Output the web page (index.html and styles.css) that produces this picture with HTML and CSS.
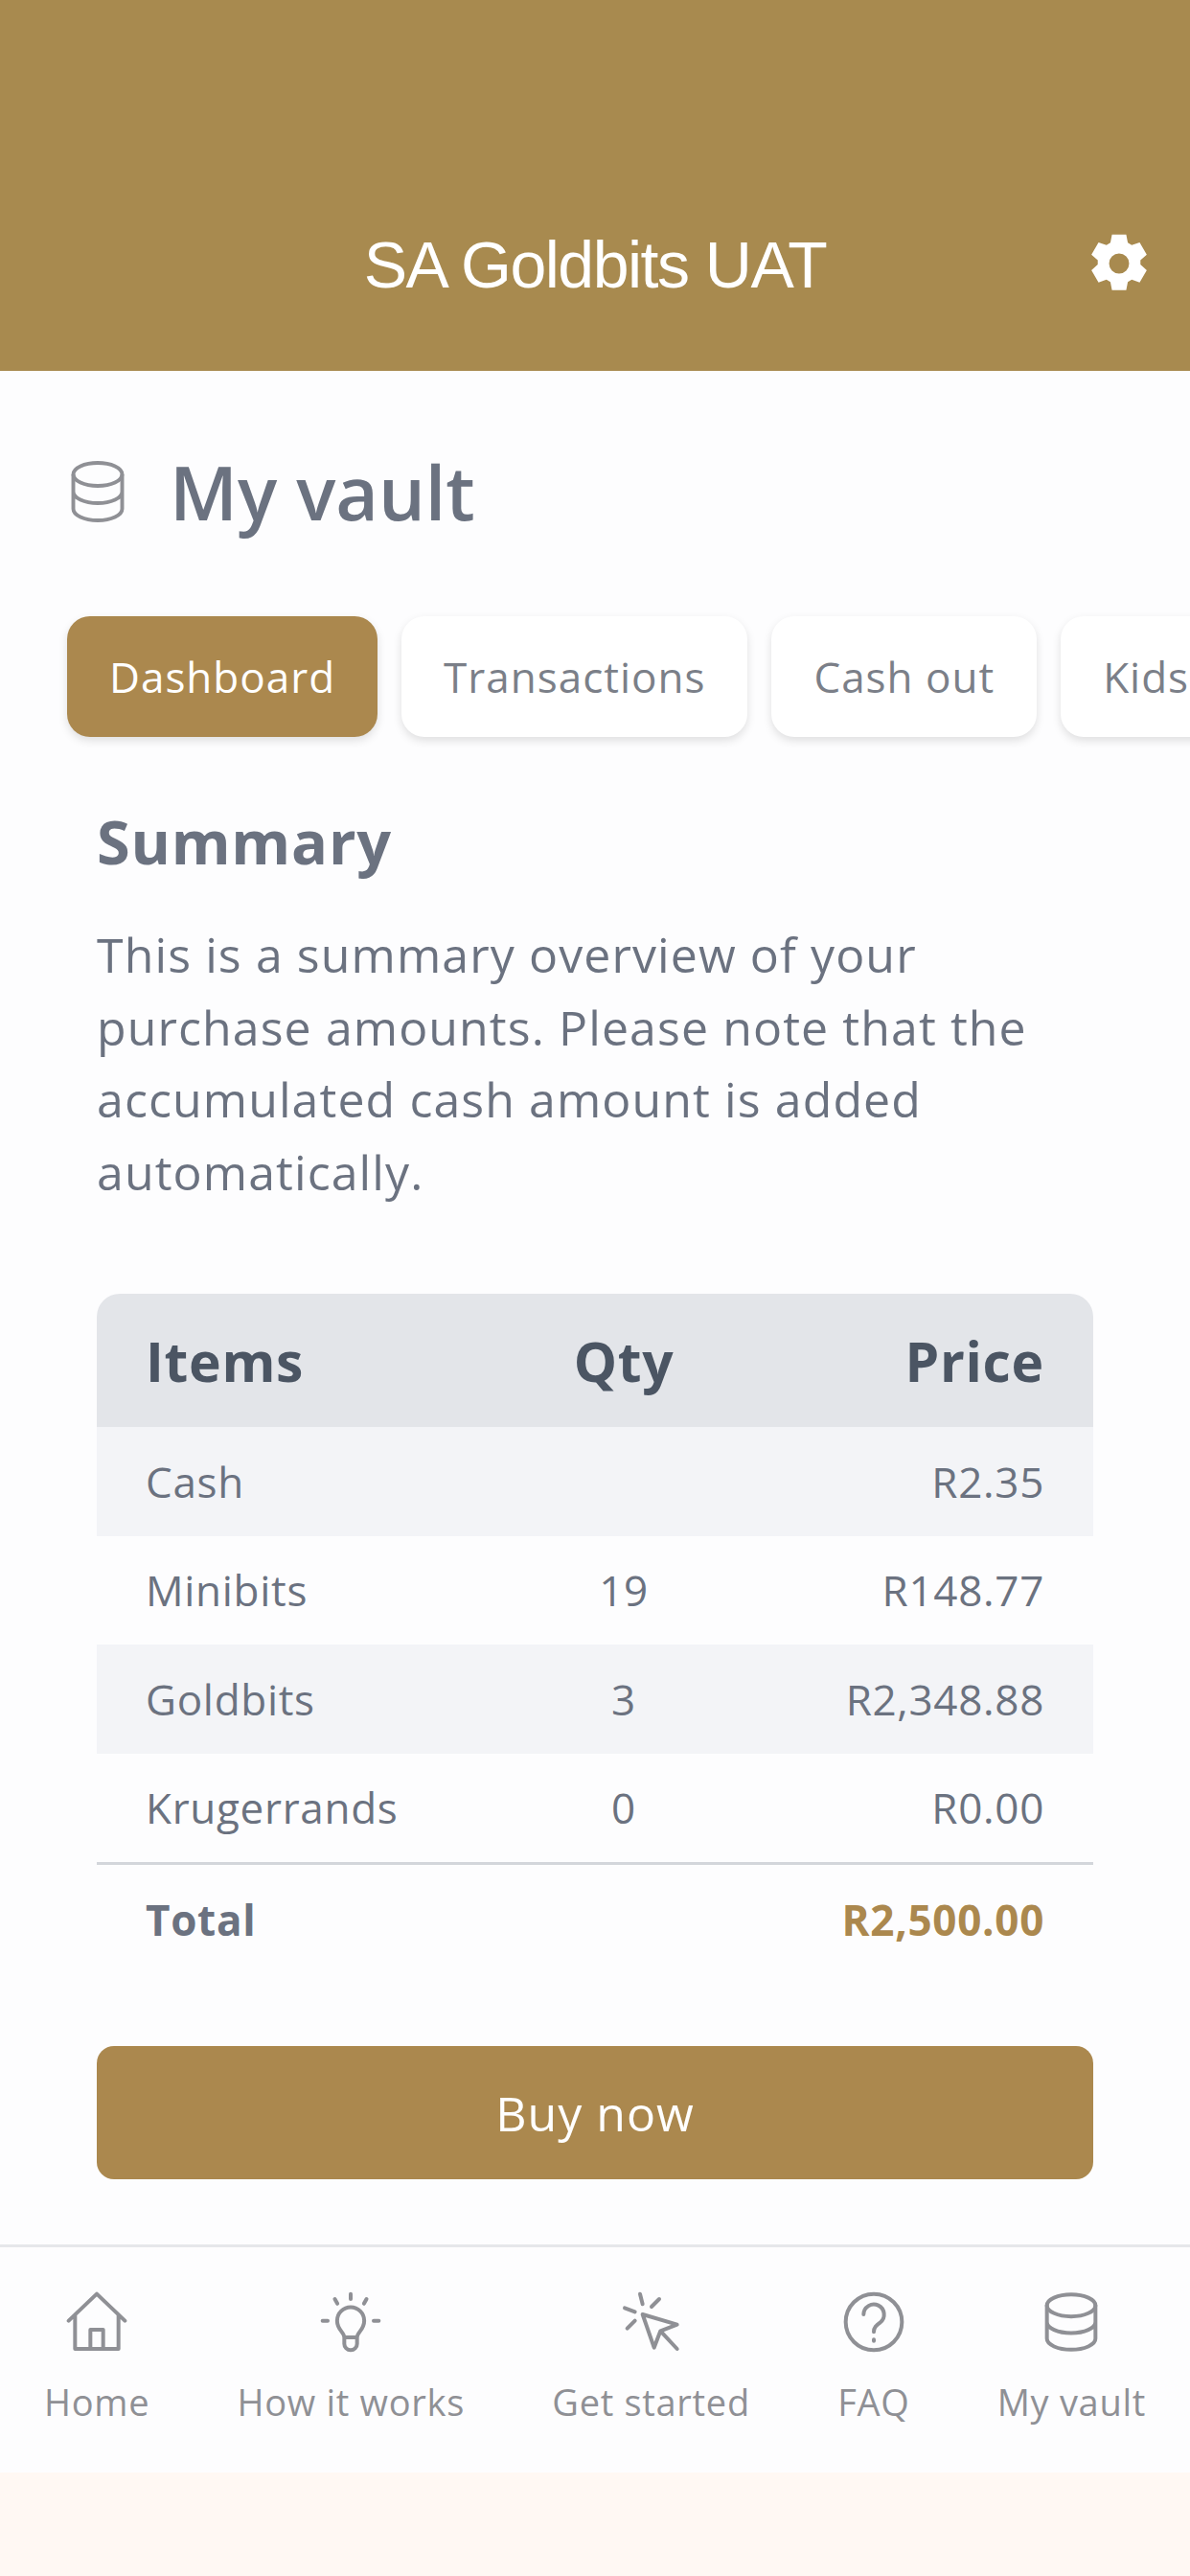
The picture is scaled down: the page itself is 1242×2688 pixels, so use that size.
FILE: index.html
```html
<!DOCTYPE html>
<html lang="en">
<head>
  <meta charset="UTF-8" />
  <title>SA Goldbits UAT</title>
  <link rel="stylesheet" href="styles.css">
</head>
<body>

  <header class="app-header">
    <div class="app-title">SA Goldbits UAT</div>
    <svg class="gear" viewBox="0 0 24 24"><path fill="#fff" fill-rule="evenodd" d="M9.3 1h5.4l.6 3.1 1.5.9 3-1 2.7 4.6-2.4 2.1v1.7l2.4 2.1-2.7 4.7-3-1.1-1.5.9-.6 3.1H9.3l-.6-3.1-1.5-.9-3 1.1-2.7-4.7 2.4-2.1v-1.7L1.5 8.6l2.7-4.6 3 1 1.5-.9zM12 8.2a3.8 3.8 0 1 0 0 7.6 3.8 3.8 0 0 0 0-7.6z"/></svg>
  </header>

  <main class="content">
    <div class="page-title">
      <svg class="page-icon" viewBox="0 0 19 22"><ellipse cx="9.5" cy="5" rx="8.5" ry="4"/><path d="M1 5v12c0 2.2 3.8 4 8.5 4s8.5-1.8 8.5-4V5M1 11c0 2.2 3.8 4 8.5 4s8.5-1.8 8.5-4"/></svg>
      <h1>My vault</h1>
    </div>

    <div class="tabs">
      <div class="tab active">Dashboard</div>
      <div class="tab">Transactions</div>
      <div class="tab">Cash out</div>
      <div class="tab">Kids</div>
    </div>

    <section class="summary">
      <h2>Summary</h2>
      <p>This is a summary overview of your purchase amounts. Please note that the accumulated cash amount is added automatically.</p>

      <table class="items">
        <thead>
          <tr><th>Items</th><th class="qty">Qty</th><th class="price">Price</th></tr>
        </thead>
        <tbody>
          <tr><td>Cash</td><td class="qty"></td><td class="price">R2.35</td></tr>
          <tr><td>Minibits</td><td class="qty">19</td><td class="price">R148.77</td></tr>
          <tr><td>Goldbits</td><td class="qty">3</td><td class="price">R2,348.88</td></tr>
          <tr><td>Krugerrands</td><td class="qty">0</td><td class="price">R0.00</td></tr>
        </tbody>
        <tfoot>
          <tr><td>Total</td><td class="qty"></td><td class="price">R2,500.00</td></tr>
        </tfoot>
      </table>

      <button class="buy" type="button">Buy now</button>
    </section>
  </main>

  <nav class="bottom-nav">
    <div class="nav-item">
      <svg viewBox="0 0 24 24"><path d="M1 11.5 12 1l11 10.5M3.5 9.5v13h17v-13M9.5 22.5V15h5v7.500"/></svg>
      <span>Home</span>
    </div>
    <div class="nav-item">
      <svg viewBox="0 0 24 24"><path d="M12 1v2M5.8 3l1 1.8M18.2 3l-1 1.8M1 11.5h2M21 11.5h2M9.5 18c0-2-2.800-3-2.800-6.500a5.300 5.300 0 0 1 10.600 0c0 3.500-2.800 4.500-2.800 6.500zM9.500 18v2.500a2.500 2.500 0 0 0 5 0V18"/></svg>
      <span>How it works</span>
    </div>
    <div class="nav-item">
      <svg viewBox="0 0 24 24"><path d="M8.5 9 13 22l2.500-6.500L22 13zM15.500 15.500 22 22.500M7.500 1l1 4M1.500 6.500l4 1.500M2.500 14.500l3-3M12 6l3-3"/></svg>
      <span>Get started</span>
    </div>
    <div class="nav-item">
      <svg viewBox="0 0 24 24"><circle cx="12" cy="12" r="11"/><path d="M8 9a4 4 0 1 1 6.500 3.200c-1.500 1.100-2.500 1.800-2.500 3.600M12 18.800v.6"/></svg>
      <span>FAQ</span>
    </div>
    <div class="nav-item">
      <svg viewBox="0 0 21 24"><ellipse cx="10.5" cy="5.5" rx="9.5" ry="4.300"/><path d="M1 5.500v13c0 2.400 4.300 4.300 9.500 4.300s9.500-1.900 9.500-4.300v-13M1 12c0 2.400 4.300 4.300 9.500 4.300s9.500-1.900 9.500-4.300"/></svg>
      <span>My vault</span>
    </div>
  </nav>

  <div class="home-bar"></div>

</body>
</html>
```

FILE: styles.css
```css
* {
  box-sizing: border-box;
}

html,
body {
  height: 100%;
}

body {
  margin: 0;
  display: flex;
  flex-direction: column;
  overflow: hidden;
  background: #fdfdfe;
  font-family: "Open Sans", sans-serif;
  color: #6b7280;
}

.app-header {
  height: 387px;
  flex: none;
  background: #a88a4f;
  position: relative;
  display: flex;
  justify-content: center;
  align-items: flex-end;
}

.app-title {
  font-family: "Liberation Sans", Arial, sans-serif;
  font-size: 68px;
  line-height: 74px;
  letter-spacing: -1.5px;
  color: #fff;
  margin-bottom: 74px;
}

.gear {
  position: absolute;
  right: 41px;
  top: 242px;
  width: 66px;
  height: 66px;
}

.content {
  flex: 1;
  padding: 0 0 0 70px;
  overflow: hidden;
}

.page-title {
  display: flex;
  align-items: center;
  height: 256px;
  padding-bottom: 4px;
  gap: 46px;
}

.page-icon {
  width: 58px;
  height: 66px;
  margin-left: 3px;
  fill: none;
  stroke: #8f9095;
  stroke-width: 1.3;
}

.page-title h1 {
  margin: 0;
  font-size: 77px;
  font-weight: 600;
  color: #6b7280;
}

.tabs {
  display: flex;
  gap: 25px;
  width: 1300px;
}

.tab {
  height: 126px;
  padding: 0 44px;
  display: flex;
  align-items: center;
  background: #fff;
  border-radius: 24px;
  box-shadow: 0 4px 10px rgba(0, 0, 0, 0.12);
  font-size: 44px;
  letter-spacing: 1px;
  color: #7b7f88;
}

.tab.active {
  background: #ab884e;
  color: #fff;
}

.summary {
  width: 1040px;
  margin-left: 31px;
}

.summary h2 {
  margin: 66px 0 0;
  font-size: 63px;
  line-height: 86px;
  font-weight: 700;
  color: #6b7280;
  letter-spacing: 0.8px;
}

.summary p {
  margin: 38px 0 0;
  font-size: 50px;
  line-height: 75.5px;
  letter-spacing: 1.1px;
  color: #6b7280;
}

.items {
  width: 100%;
  margin-top: 89px;
  border-collapse: separate;
  border-spacing: 0;
  table-layout: fixed;
  font-size: 44px;
}

.items th,
.items td {
  padding: 0 51px;
  text-align: left;
  height: 113.5px;
  letter-spacing: 0.7px;
}

.items th {
  height: 139px;
  background: #e3e5e9;
  font-size: 57px;
  font-weight: 700;
  color: #4b5563;
}

.items th:first-child {
  border-top-left-radius: 24px;
}

.items th:last-child {
  border-top-right-radius: 24px;
}

.items .qty {
  width: 220px;
  padding: 0 0 0 2px;
  text-align: center;
}

.items .price {
  width: 381px;
  text-align: right;
}

.items tbody tr:nth-child(odd) td {
  background: #f3f4f7;
}

.items tfoot td {
  height: 116px;
  border-top: 3px solid #d3d6db;
  font-weight: 700;
}

.items tfoot .price {
  color: #ab884e;
}

.buy {
  display: block;
  width: 100%;
  height: 139px;
  margin-top: 76px;
  background: #ab884e;
  border: none;
  border-radius: 18px;
  color: #fff;
  font-family: "Open Sans", sans-serif;
  font-size: 50px;
  letter-spacing: 1px;
}

.bottom-nav {
  height: 238px;
  flex: none;
  border-top: 3px solid #e6e7ea;
  padding: 46px 46px 0;
  display: flex;
  justify-content: space-between;
  background: #fdfdfe;
}

.nav-item {
  display: flex;
  flex-direction: column;
  align-items: center;
  gap: 25px;
  font-size: 38px;
  letter-spacing: 0.7px;
  color: #8f9095;
}

.nav-item svg {
  width: 64px;
  height: 64px;
  fill: none;
  stroke: #8f9095;
  stroke-width: 1.5;
  stroke-linecap: round;
  stroke-linejoin: round;
}

.home-bar {
  height: 108px;
  flex: none;
  background: #fff8f3;
}
```
